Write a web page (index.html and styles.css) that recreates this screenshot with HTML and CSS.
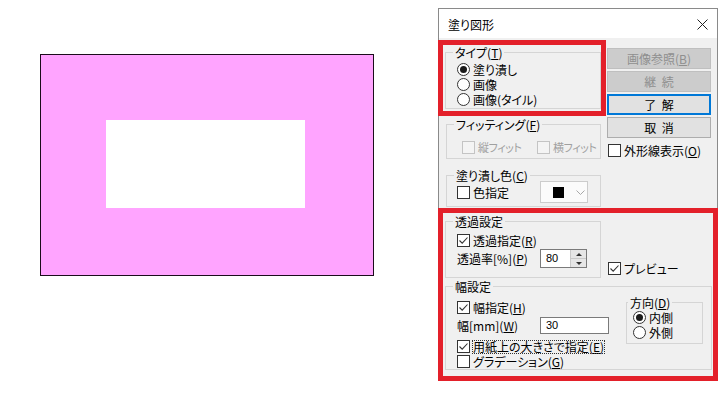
FILE: index.html
```html
<!DOCTYPE html>
<html lang="ja">
<head>
  <meta charset="UTF-8">
  <title>塗り図形</title>
  <link rel="stylesheet" href="styles.css">
</head>
<body>
  <div class="screen">
    <div class="canvas">
      <div class="shape"><div class="hole"></div></div>
    </div>

    <div class="dialog">
      <div class="titlebar">
        <span class="title">塗り図形</span>
        <svg class="close" width="11" height="11" viewBox="0 0 11 11"><path d="M0.5 0.5 L10.5 10.5 M10.5 0.5 L0.5 10.5" stroke="#222" stroke-width="1" fill="none"/></svg>
      </div>

      <div class="dlg-body">
        <div class="top">
          <div class="left-col">
            <div class="mark mark-type">
              <div class="group g-type">
                <div class="group-title">タイプ(<u>T</u>)</div>
                <div class="rows">
                  <div class="row r15"><span class="radio on"></span>塗り潰し</div>
                  <div class="row r15"><span class="radio"></span>画像</div>
                  <div class="row r15"><span class="radio"></span>画像(タイル)</div>
                </div>
              </div>
            </div>

            <div class="group g-fit">
              <div class="group-title">フィッティング(<u>F</u>)</div>
              <div class="row r15 fit-row">
                <span class="fit-item"><span class="check off"></span>縦フィット</span>
                <span class="fit-item"><span class="check off"></span>横フィット</span>
              </div>
            </div>

            <div class="group g-color">
              <div class="group-title">塗り潰し色(<u>C</u>)</div>
              <div class="row color-row">
                <span class="field-label"><span class="check"></span>色指定</span>
                <span class="combo"><span class="swatch"></span><svg class="chev" width="9" height="5" viewBox="0 0 9 5"><path d="M0.5 0.5 L4.5 4.5 L8.5 0.5" fill="none" stroke="#a8a8a8" stroke-width="1"/></svg></span>
              </div>
            </div>
          </div>

          <div class="right-col">
            <div class="btn disabled">画像参照(<u>B</u>)</div>
            <div class="btn disabled">継&nbsp;&nbsp;続</div>
            <div class="btn default">了&nbsp;&nbsp;解</div>
            <div class="btn">取&nbsp;&nbsp;消</div>
            <div class="row r15 outline"><span class="check"></span>外形線表示(<u>O</u>)</div>
          </div>
        </div>

        <div class="mark mark-bottom">
          <div class="trans-line">
            <div class="group g-trans">
              <div class="group-title">透過設定</div>
              <div class="rows">
                <div class="row r15 t-check"><span class="check on"><svg viewBox="0 0 11 11"><path d="M1.5 5.5 L4.2 8.2 L9.5 2.5" /></svg></span>透過指定(<u>R</u>)</div>
                <div class="row t-rate">
                  <span class="field-label">透過率[%](<u>P</u>)</span>
                  <span class="spin"><span class="spin-val">80</span><span class="spin-btns"><span class="up"></span><span class="down"></span></span></span>
                </div>
              </div>
            </div>
            <div class="row r15 preview"><span class="check on"><svg viewBox="0 0 11 11"><path d="M1.5 5.5 L4.2 8.2 L9.5 2.5" /></svg></span>プレビュー</div>
          </div>

          <div class="group g-width">
            <div class="group-title">幅設定</div>
            <div class="width-body">
              <div class="width-left">
                <div class="row r15 w-check"><span class="check on"><svg viewBox="0 0 11 11"><path d="M1.5 5.5 L4.2 8.2 L9.5 2.5" /></svg></span>幅指定(<u>H</u>)</div>
                <div class="row w-mm">
                  <span class="field-label">幅[mm](<u>W</u>)</span>
                  <span class="textbox">30</span>
                </div>
                <div class="row r13 w-paper"><span class="check on"><svg viewBox="0 0 11 11"><path d="M1.5 5.5 L4.2 8.2 L9.5 2.5" /></svg></span><span class="focus">用紙上の大きさで指定(<u>E</u>)</span></div>
                <div class="row r13 w-grad"><span class="check"></span>グラデーション(<u>G</u>)</div>
              </div>
              <div class="group g-dir">
                <div class="group-title">方向(<u>D</u>)</div>
                <div class="dir-rows">
                  <div class="row r15"><span class="radio on"></span>内側</div>
                  <div class="row r15"><span class="radio"></span>外側</div>
                </div>
              </div>
            </div>
          </div>
        </div>
      </div>
    </div>
  </div>
</body>
</html>
```

FILE: styles.css
```css
body {
  margin: 0;
  background: #ffffff;
  font-family: "Noto Sans CJK JP", "Noto Sans", sans-serif;
  font-size: 12px;
  font-feature-settings: "palt";
  color: #000000;
  overflow: hidden;
}
u {
  text-decoration-thickness: 1px;
  text-underline-offset: 1px;
}
.screen {
  display: flex;
  align-items: flex-start;
}

/* drawing canvas */
.canvas {
  width: 438px;
  padding: 54px 0 0 40px;
  box-sizing: border-box;
}
.shape {
  width: 334px;
  height: 222px;
  box-sizing: border-box;
  border: 1px solid #1c0c1c;
  background: #ffa4ff;
  padding: 65px 0 0 65px;
}
.hole {
  width: 199px;
  height: 88px;
  background: #ffffff;
}

/* dialog window */
.dialog {
  margin-top: 8px;
  width: 280px;
  height: 373px;
  box-sizing: border-box;
  border: 1px solid #8a8a8a;
  background: #f0f0f0;
}
.titlebar {
  height: 29px;
  background: #ffffff;
  display: flex;
  align-items: center;
  justify-content: space-between;
  padding: 0 9px 0 9px;
}
.title {
  font-size: 12px;
  padding-top: 1px;
}
.close {
  margin-top: 1px;
}
.top {
  display: flex;
  height: 170px;
}
.left-col {
  margin-left: -1px;
  width: 168px;
}
.right-col {
  margin-left: 1px;
  width: 104px;
  padding-top: 10px;
}

/* red highlight frames */
.mark {
  border: 5px solid #e3202a;
  box-sizing: border-box;
}
.mark-type {
  margin-top: 2px;
  height: 76px;
  padding: 7px 0 0 2px;
}
.mark-bottom {
  margin-left: -1px;
  width: 280px;
  height: 173px;
  padding: 8px 0 0 2px;
}

/* group boxes */
.group {
  border: 1px solid #d5d5d5;
  box-sizing: border-box;
}
.group-title {
  width: fit-content;
  margin: -7px 0 0 7px;
  padding: 0 2px;
  line-height: 13px;
  height: 13px;
  background: #f0f0f0;
}
.g-type {
  width: 156px;
  height: 57px;
}
.g-type .rows {
  margin-top: 3px;
  padding-left: 11px;
}
.g-fit {
  margin: 8px 0 0 8px;
  width: 155px;
  height: 35px;
}
.fit-row {
  margin-top: 9px;
  padding-left: 15px;
  color: #a0a0a0;
}
.fit-item {
  display: flex;
  align-items: center;
  flex: none;
  width: 75px;
  font-size: 11px;
  letter-spacing: -0.4px;
}
.fit-item:last-child {
  width: auto;
}
.g-color {
  margin: 16px 0 0 8px;
  width: 155px;
  height: 32px;
}
.color-row {
  margin-top: -1px;
  padding-left: 10px;
  height: 22px;
}

/* rows and controls */
.row {
  display: flex;
  align-items: center;
  white-space: nowrap;
  line-height: 13px;
}
.r15 { height: 15px; }
.r14 { height: 14px; }
.r13 { height: 13px; }
.field-label {
  display: flex;
  align-items: center;
  width: 83px;
}
.radio {
  width: 13px;
  height: 13px;
  box-sizing: border-box;
  border: 1px solid #333333;
  border-radius: 50%;
  background: #ffffff;
  margin-right: 3px;
  display: flex;
  align-items: center;
  justify-content: center;
  flex: none;
}
.radio.on::after {
  content: "";
  width: 7px;
  height: 7px;
  border-radius: 50%;
  background: #1a1a1a;
}
.check {
  width: 13px;
  height: 13px;
  box-sizing: border-box;
  border: 1px solid #333333;
  background: #ffffff;
  margin-right: 3px;
  flex: none;
  display: flex;
}
.check svg {
  width: 11px;
  height: 11px;
}
.check path {
  fill: none;
  stroke: #333333;
  stroke-width: 1.1;
}
.check.off {
  border-color: #c4c4c4;
  background: #f4f4f4;
}
.combo {
  width: 48px;
  height: 22px;
  box-sizing: border-box;
  border: 1px solid #cccccc;
  background: #fbfbfb;
  display: flex;
  align-items: center;
}
.swatch {
  width: 11px;
  height: 11px;
  background: #000000;
  margin-left: 12px;
}
.chev {
  margin-left: 12px;
}

/* buttons */
.btn {
  height: 21px;
  box-sizing: border-box;
  border: 1px solid #adadad;
  background: #e1e1e1;
  text-align: center;
  line-height: 19px;
  margin-bottom: 2px;
}
.btn.disabled {
  background: #cccccc;
  border-color: #bfbfbf;
  color: #8f8f8f;
}
.btn.default {
  border: 2px solid #0078d7;
  line-height: 17px;
}
.outline {
  margin: 5px 0 0 1px;
}

/* transparency */
.trans-line {
  display: flex;
  align-items: flex-end;
}
.g-trans {
  width: 156px;
  height: 57px;
}
.g-trans .rows {
  padding-left: 11px;
}
.t-check {
  margin-top: 5px;
}
.t-rate {
  margin-top: 1px;
  height: 19px;
}
.spin {
  width: 47px;
  height: 19px;
  box-sizing: border-box;
  border: 1px solid #7a7a7a;
  background: #ffffff;
  display: flex;
}
.spin-val {
  flex: 1;
  padding-left: 5px;
  line-height: 17px;
  font-family: "Liberation Sans", sans-serif;
  font-size: 11px;
}
.spin-btns {
  width: 15px;
  display: flex;
  flex-direction: column;
  background: #e6e6e6;
  border-left: 1px solid #c9c9c9;
}
.spin-btns span {
  flex: 1;
  display: flex;
  align-items: center;
  justify-content: center;
}
.spin-btns .up {
  border-bottom: 1px solid #c9c9c9;
}
.spin-btns .up::after {
  content: "";
  border: 3px solid transparent;
  border-bottom: 3px solid #333333;
  border-top: none;
}
.spin-btns .down::after {
  content: "";
  border: 3px solid transparent;
  border-top: 3px solid #333333;
  border-bottom: none;
}
.preview {
  margin: 0 0 2px 7px;
}

/* width settings */
.g-width {
  margin-top: 8px;
  width: 267px;
  height: 84px;
}
.width-body {
  display: flex;
  align-items: flex-start;
}
.width-left {
  padding-left: 11px;
}
.w-check {
  margin-top: 7px;
}
.w-mm {
  margin-top: 2px;
  height: 17px;
}
.textbox {
  width: 69px;
  height: 17px;
  box-sizing: border-box;
  border: 1px solid #7a7a7a;
  background: #ffffff;
  padding-left: 5px;
  line-height: 15px;
  font-family: "Liberation Sans", sans-serif;
  font-size: 11px;
}
.w-paper {
  margin-top: 6px;
}
.w-grad {
  margin-top: 2px;
}
.focus {
  display: inline-block;
  height: 12px;
  line-height: 12px;
  outline: 1px dotted #333333;
}
.g-dir {
  margin: 9px 8px 0 auto;
  width: 77px;
  height: 42px;
}
.g-dir .group-title {
  margin-left: 1px;
}
.dir-rows {
  margin-top: 1px;
  padding-left: 6px;
}
```
